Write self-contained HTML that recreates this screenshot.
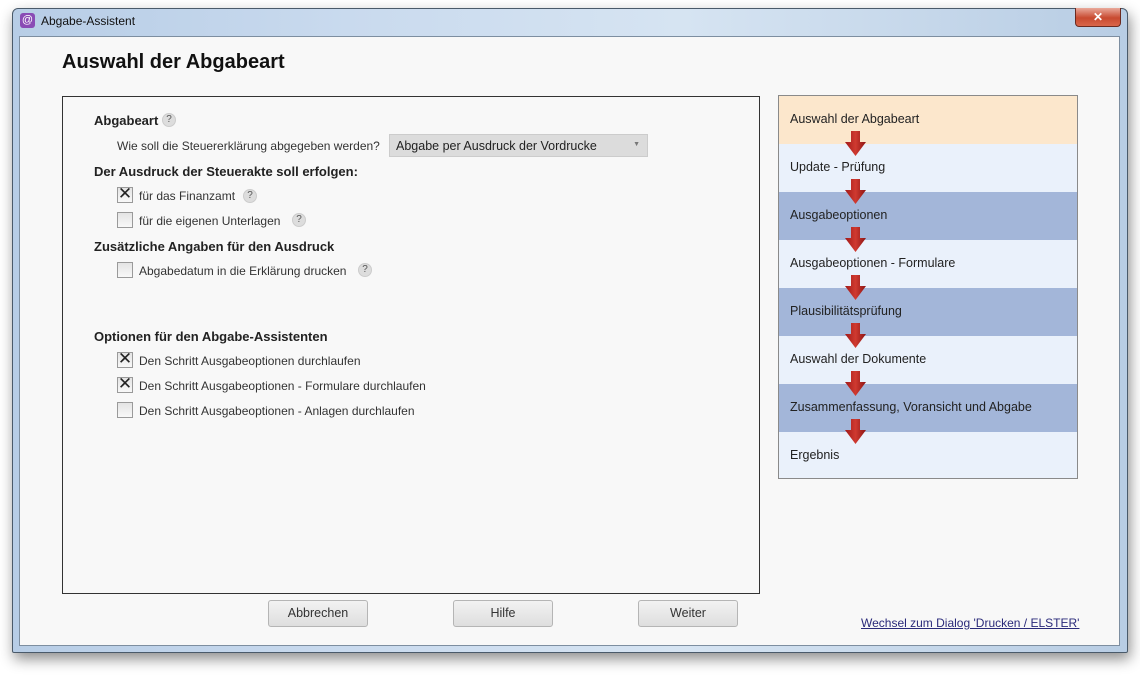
<!DOCTYPE html>
<html><head><meta charset="utf-8"><style>
*{margin:0;padding:0;box-sizing:border-box}
body{width:1140px;height:681px;background:#fff;position:relative;font-family:"Liberation Sans",sans-serif;overflow:hidden;color:#222}
.abs{position:absolute}
.win{left:12px;top:8px;width:1116px;height:645px;border:1px solid #4a5a6a;border-radius:6px 6px 2px 2px;background:linear-gradient(90deg,#b7cde6,#c9daee 30%,#d6e4f2 60%,#b8cde4);box-shadow:2px 6px 14px rgba(0,0,0,.45)}
.client{left:19px;top:36px;width:1101px;height:610px;background:#f8f8f8;border:1px solid #7d8ea0}
.t{font-size:12px;white-space:nowrap}
.b{font-weight:bold;font-size:13px;white-space:nowrap}
.cb{width:16px;height:16px;border:1px solid #9a9a9a;background:linear-gradient(#e4e4e4,#f8f8f8)}
.q{width:14px;height:14px;border-radius:50%;background:#ddd;border:1px solid #ccc;font-size:10px;text-align:center;line-height:12px;color:#555}
.btn{width:100px;height:27px;border:1px solid #b5b5b5;border-radius:3px;background:linear-gradient(#f2f2f2,#dedede);font-size:12.5px;text-align:center;line-height:25px;color:#333}
.row{left:779px;width:298px;height:48px;font-size:12.5px;padding:16px 0 0 11px;white-space:nowrap}
</style></head><body>
<div class="abs win"></div>
<div class="abs" style="left:20px;top:13px;width:15px;height:15px;border-radius:3px;background:#8a4bb5;color:#fff;font-size:11px;text-align:center;line-height:14px">@</div>
<div class="abs t" style="left:41px;top:14px;color:#111">Abgabe-Assistent</div>
<div class="abs" style="left:1075px;top:8px;width:46px;height:19px;border:1px solid #6b2a20;border-top:none;border-radius:0 0 4px 4px;background:linear-gradient(#e9a99a,#c84a30 55%,#d9664a);color:#fff;font-weight:bold;font-size:12px;text-align:center;line-height:18px">✕</div>
<div class="abs client"></div>
<div class="abs" style="left:62px;top:51px;font-size:20px;font-weight:bold;color:#111">Auswahl der Abgabeart</div>
<div class="abs" style="left:62px;top:96px;width:698px;height:498px;border:1px solid #333;background:#f8f8f8"></div>
<div class="abs b" style="left:94px;top:113px">Abgabeart</div><div class="abs q" style="left:162px;top:113px">?</div>
<div class="abs t" style="left:117px;top:139px;color:#333">Wie soll die Steuererklärung abgegeben werden?</div>
<div class="abs" style="left:389px;top:134px;width:259px;height:23px;background:#dcdcdc;border:1px solid #ccc;font-size:12.5px;padding:4px 6px;color:#222">Abgabe per Ausdruck der Vordrucke<span style="position:absolute;right:7px;top:6px;font-size:7px;color:#777">▼</span></div>
<div class="abs b" style="left:94px;top:164px">Der Ausdruck der Steuerakte soll erfolgen:</div>
<div class="abs cb" style="left:117px;top:187px"></div><div class="abs" style="left:117px;top:184px;width:16px;font-size:17px;text-align:center;color:#222">✕</div>
<div class="abs t" style="left:139px;top:189px;color:#333">für das Finanzamt</div><div class="abs q" style="left:243px;top:189px">?</div>
<div class="abs cb" style="left:117px;top:212px"></div>
<div class="abs t" style="left:139px;top:214px;color:#333">für die eigenen Unterlagen</div><div class="abs q" style="left:292px;top:213px">?</div>
<div class="abs b" style="left:94px;top:239px">Zusätzliche Angaben für den Ausdruck</div>
<div class="abs cb" style="left:117px;top:262px"></div>
<div class="abs t" style="left:139px;top:264px;color:#333">Abgabedatum in die Erklärung drucken</div><div class="abs q" style="left:358px;top:263px">?</div>
<div class="abs b" style="left:94px;top:329px">Optionen für den Abgabe-Assistenten</div>
<div class="abs cb" style="left:117px;top:352px"></div><div class="abs" style="left:117px;top:349px;width:16px;font-size:17px;text-align:center">✕</div>
<div class="abs t" style="left:139px;top:354px;color:#333">Den Schritt Ausgabeoptionen durchlaufen</div>
<div class="abs cb" style="left:117px;top:377px"></div><div class="abs" style="left:117px;top:374px;width:16px;font-size:17px;text-align:center">✕</div>
<div class="abs t" style="left:139px;top:379px;color:#333">Den Schritt Ausgabeoptionen - Formulare durchlaufen</div>
<div class="abs cb" style="left:117px;top:402px"></div>
<div class="abs t" style="left:139px;top:404px;color:#333">Den Schritt Ausgabeoptionen - Anlagen durchlaufen</div>

<div class="abs" style="left:778px;top:95px;width:300px;height:384px;border:1px solid #8a8a8a;background:#eaf1fb"></div>
<div class="abs row" style="top:96px;background:#fce7cc">Auswahl der Abgabeart</div>
<div class="abs row" style="top:144px;background:#eaf1fb">Update - Prüfung</div>
<div class="abs row" style="top:192px;background:#a3b6d9">Ausgabeoptionen</div>
<div class="abs row" style="top:240px;background:#eaf1fb">Ausgabeoptionen - Formulare</div>
<div class="abs row" style="top:288px;background:#a3b6d9">Plausibilitätsprüfung</div>
<div class="abs row" style="top:336px;background:#eaf1fb">Auswahl der Dokumente</div>
<div class="abs row" style="top:384px;background:#a3b6d9">Zusammenfassung, Voransicht und Abgabe</div>
<div class="abs row" style="top:432px;height:46px;background:#eaf1fb">Ergebnis</div>
<svg class="abs" style="left:0;top:0" width="1140" height="681">
<defs><linearGradient id="g" x1="0" x2="1"><stop offset="0" stop-color="#a01818"/><stop offset=".5" stop-color="#d03a30"/><stop offset="1" stop-color="#8c1414"/></linearGradient></defs>
<g fill="url(#g)">
<path d="M851 131h9v11h6l-10.5 14l-10.5-14h6z"/>
<path d="M851 179h9v11h6l-10.5 14l-10.5-14h6z"/>
<path d="M851 227h9v11h6l-10.5 14l-10.5-14h6z"/>
<path d="M851 275h9v11h6l-10.5 14l-10.5-14h6z"/>
<path d="M851 323h9v11h6l-10.5 14l-10.5-14h6z"/>
<path d="M851 371h9v11h6l-10.5 14l-10.5-14h6z"/>
<path d="M851 419h9v11h6l-10.5 14l-10.5-14h6z"/>
</g></svg>
<div class="abs btn" style="left:268px;top:600px">Abbrechen</div>
<div class="abs btn" style="left:453px;top:600px">Hilfe</div>
<div class="abs btn" style="left:638px;top:600px">Weiter</div>
<div class="abs t" style="left:861px;top:616px;color:#2a2a7a;text-decoration:underline">Wechsel zum Dialog 'Drucken / ELSTER'</div>
</body></html>
